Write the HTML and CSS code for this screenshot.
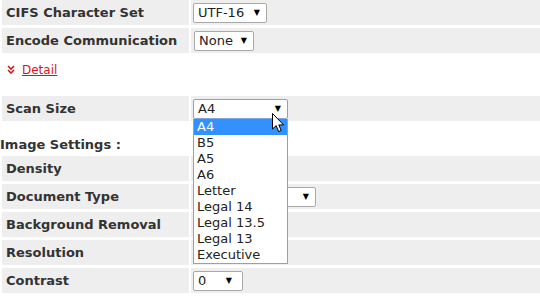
FILE: index.html
```html
<!DOCTYPE html>
<html lang="en">
<head>
  <meta charset="UTF-8">
  <meta name="viewport" content="width=device-width, initial-scale=1.0">
  <title>Scan Settings</title>
  <link rel="stylesheet" href="styles.css">
</head>
<body>
  <div class="settings">
    <div class="row">
      <div class="label">CIFS Character Set</div>
      <div class="value"><span class="select w-utf">UTF-16<i class="arrow">&#9660;</i></span></div>
    </div>
    <div class="row">
      <div class="label">Encode Communication</div>
      <div class="value"><span class="select w-none">None<i class="arrow">&#9660;</i></span></div>
    </div>

    <div class="detail">
      <svg class="chevron" width="8" height="9" viewBox="0 0 8 9">
        <polyline points="1,1 4,4 7,1" fill="none" stroke="#d7141e" stroke-width="1.6"/>
        <polyline points="1,5 4,8 7,5" fill="none" stroke="#d7141e" stroke-width="1.6"/>
      </svg>
      <a href="#">Detail</a>
    </div>

    <div class="row">
      <div class="label">Scan Size</div>
      <div class="value">
        <div class="dropdown">
          <span class="select w-size focused">A4<i class="arrow">&#9660;</i></span>
          <ul class="options">
            <li class="selected">A4</li>
            <li>B5</li>
            <li>A5</li>
            <li>A6</li>
            <li>Letter</li>
            <li>Legal 14</li>
            <li>Legal 13.5</li>
            <li>Legal 13</li>
            <li>Executive</li>
          </ul>
          <svg class="cursor" width="13" height="20" viewBox="0 0 13 20">
            <path d="M0.5 0.5 L0.5 16 L4.2 12.6 L6.7 18.6 L9.2 17.5 L6.8 11.9 L11.6 11.9 Z" fill="#fff" stroke="#000" stroke-width="1"/>
          </svg>
        </div>
      </div>
    </div>

    <div class="section">Image Settings :</div>

    <div class="row">
      <div class="label">Density</div>
      <div class="value"></div>
    </div>
    <div class="row">
      <div class="label">Document Type</div>
      <div class="value"><span class="select w-doc">&nbsp;<i class="arrow">&#9660;</i></span></div>
    </div>
    <div class="row">
      <div class="label">Background Removal</div>
      <div class="value"></div>
    </div>
    <div class="row">
      <div class="label">Resolution</div>
      <div class="value"></div>
    </div>
    <div class="row">
      <div class="label">Contrast</div>
      <div class="value"><span class="select w-contrast">0<i class="arrow">&#9660;</i></span></div>
    </div>
  </div>
</body>
</html>
```

FILE: styles.css
```css
body {
  margin: 0;
  background: #ffffff;
  font-family: "DejaVu Sans", Verdana, sans-serif;
  font-size: 13px;
  color: #222;
}

.settings {
  width: 540px;
}

.row {
  display: grid;
  grid-template-columns: 187px 1fr;
  column-gap: 2px;
  height: 25px;
  margin-bottom: 3px;
  padding-left: 2px;
}

.label {
  background: #eeeeee;
  padding-left: 4px;
  font-weight: bold;
  color: #333;
  line-height: 25px;
}

.value {
  background: #eeeeee;
  padding-left: 2px;
  display: flex;
  align-items: center;
}

.select {
  position: relative;
  display: block;
  box-sizing: border-box;
  height: 20px;
  line-height: 18px;
  padding-left: 4px;
  background: #fff;
  border: 1px solid #a9a9a9;
  border-radius: 2px;
  color: #222;
}

.select.focused {
  border-color: #7ea6d8;
}

.arrow {
  position: absolute;
  top: 0;
  right: 6px;
  font-style: normal;
  font-size: 8px;
  color: #000;
}

.w-utf { width: 74px; }
.w-none { width: 60px; margin-left: 1px; }
.w-size { width: 95px; }
.w-doc { width: 123px; }
.w-contrast { width: 50px; }
.w-contrast .arrow { right: 10px; }

.detail {
  height: 34px;
  padding-bottom: 9px;
  margin-top: -3px;
  padding-left: 7px;
  display: flex;
  align-items: center;
  gap: 7px;
}

.detail a {
  color: #d7141e;
  font-size: 12px;
  text-decoration: underline;
}

.chevron {
  margin-top: -2px;
}

.section {
  margin-top: -3px;
  padding-top: 16px;
  padding-bottom: 3px;
  line-height: 16px;
  font-weight: bold;
  color: #333;
}

.dropdown {
  position: relative;
}

.options {
  position: absolute;
  top: 20px;
  left: 0;
  z-index: 2;
  box-sizing: border-box;
  width: 95px;
  margin: 0;
  padding: 0;
  list-style: none;
  background: #fff;
  border: 1px solid #a0a0a0;
  border-top: none;
}

.options li {
  height: 16px;
  line-height: 16px;
  padding-left: 3px;
  color: #222;
}

.options li.selected {
  background: #3390ff;
  color: #fff;
}

.cursor {
  position: absolute;
  left: 79px;
  top: 14px;
  z-index: 3;
}
```
